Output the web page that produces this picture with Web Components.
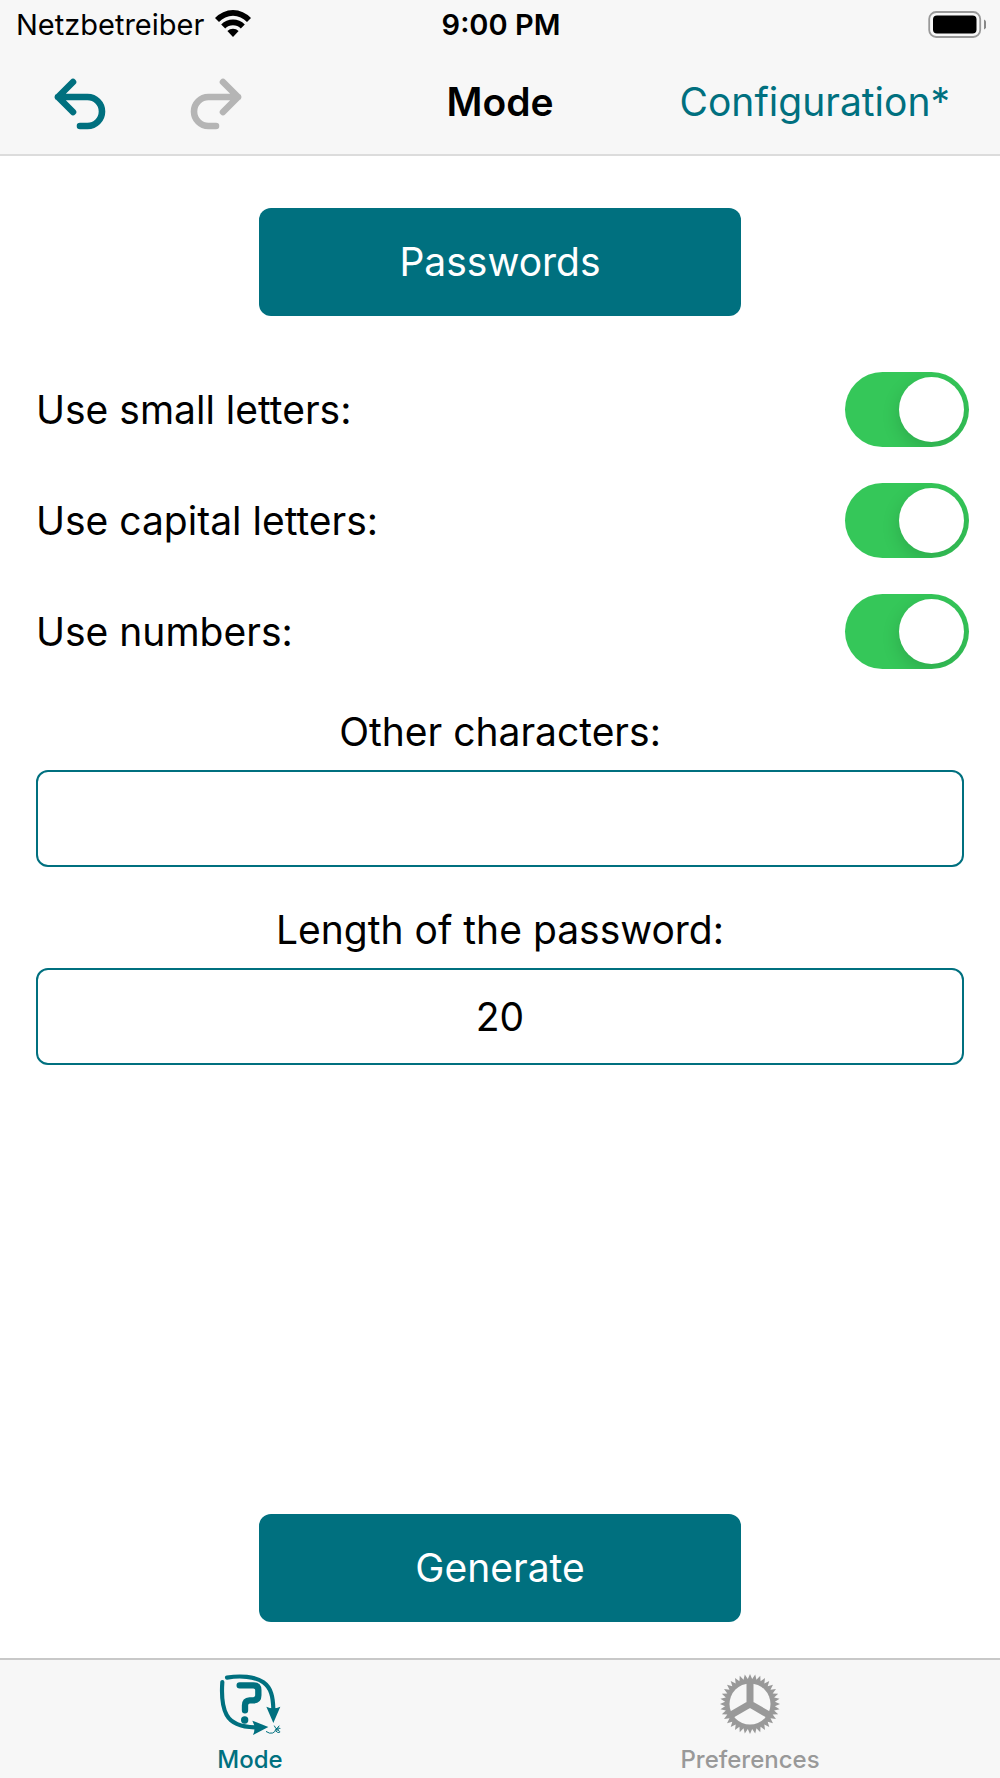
<!DOCTYPE html>
<html lang="en">
<head>
<meta charset="utf-8">
<meta name="viewport" content="width=device-width, initial-scale=1">
<title>Mode</title>
<style>
    html, body {
        margin: 0;
        height: 100%;
    }

    body {
        --accent: #00707f;
        --bar: #f7f7f7;
        --disabled: #b5b5b5;
        background: #fff;
        color: #000;
        font-family: Inter, "Liberation Sans", sans-serif;
        font-size: 39px;
        line-height: 48px;
    }
</style>
</head>
<body>
<password-app></password-app>

<script>
/* status bar: carrier, clock, battery */
class StatusBar extends HTMLElement {
    constructor() {
        super();
        this.attachShadow({mode: "open"});
        this.shadowRoot.innerHTML = `
            <style>
                :host {
                    display: grid;
                    grid-template-columns: 1fr auto 1fr;
                    align-items: center;
                    height: 50px;
                    padding: 0 14px 0 16px;
                    font-size: 29px;
                    line-height: 32px;
                }
                .carrier { display: flex; align-items: center; gap: 11px; }
                .time { font-weight: 600; }
                .battery { justify-self: end; }
                svg { display: block; }
            </style>
            <div class="carrier">
                <slot name="carrier"></slot>
                <svg width="36" height="30" viewBox="0 0 36 30">
                    <path d="M0 8A24.5 24.5 0 0 1 36 8L32 12A19 19 0 0 0 4 12Z"/>
                    <path d="M6.2 14.4A16.6 16.6 0 0 1 29.8 14.4L25.8 18.5A11.2 11.2 0 0 0 10.2 18.5Z"/>
                    <path d="M12.4 21A8 8 0 0 1 23.6 21L18 27Z"/>
                </svg>
            </div>
            <div class="time"><slot name="time"></slot></div>
            <svg class="battery" width="58" height="28" viewBox="0 0 58 28">
                <rect x="1.2" y="1" width="51" height="25" rx="7" fill="none" stroke="#999" stroke-width="1.8"/>
                <rect x="5" y="4.5" width="43.5" height="18" rx="4"/>
                <path d="M56 8.5C60 10.5 60 16.5 56 18.5Z" fill="#888"/>
            </svg>
        `;
    }
}

/* navigation bar with undo / redo, title and a link */
class NavBar extends HTMLElement {
    constructor() {
        super();
        this.attachShadow({mode: "open"});
        this.shadowRoot.innerHTML = `
            <style>
                :host {
                    display: grid;
                    grid-template-columns: 1fr auto 1fr;
                    align-items: center;
                    height: 104px;
                    padding: 0 50px;
                }
                .history { display: flex; gap: 76px; }
                button {
                    padding: 0;
                    border: 0;
                    background: none;
                    color: var(--accent);
                }
                button:disabled { color: var(--disabled); }
                svg {
                    display: block;
                    fill: none;
                    stroke: currentColor;
                    stroke-width: 6.6;
                    stroke-linecap: round;
                    stroke-linejoin: round;
                }
                h1 { margin: 0; font-size: inherit; font-weight: 600; }
                a {
                    justify-self: end;
                    color: var(--accent);
                    text-decoration: none;
                }
            </style>
            <div class="history">
                <button type="button" aria-label="Undo">
                    <svg width="60" height="56" viewBox="-4 -4 60 56">
                        <path d="M19 4L4 19L19 34M4 19H33.5A14.5 14.5 0 0 1 33.5 48H26"/>
                    </svg>
                </button>
                <button type="button" aria-label="Redo" disabled>
                    <svg width="60" height="56" viewBox="-4 -4 60 56">
                        <path d="M33 4L48 19L33 34M48 19H18.5A14.5 14.5 0 0 0 18.5 48H26"/>
                    </svg>
                </button>
            </div>
            <h1><slot name="title"></slot></h1>
            <a href="#configuration"><slot name="action"></slot></a>
        `;
    }
}

/* filled button */
class ActionButton extends HTMLElement {
    constructor() {
        super();
        this.attachShadow({mode: "open"});
        this.shadowRoot.innerHTML = `
            <style>
                :host {
                    display: block;
                    width: 100%;
                    max-width: 482px;
                    align-self: center;
                }
                button {
                    display: block;
                    width: 100%;
                    padding: 30px 16px;
                    border: 0;
                    border-radius: 12px;
                    background: var(--accent);
                    color: #fff;
                    font: inherit;
                }
            </style>
            <button type="button"><slot></slot></button>
        `;
    }
}

/* label on the left, switch on the right */
class SwitchRow extends HTMLElement {
    constructor() {
        super();
        this.attachShadow({mode: "open"});
        this.shadowRoot.innerHTML = `
            <style>
                :host {
                    display: flex;
                    align-items: center;
                    justify-content: space-between;
                }
                input {
                    appearance: none;
                    display: flex;
                    flex: none;
                    box-sizing: border-box;
                    width: 124px;
                    height: 75px;
                    margin: 0;
                    padding: 5px;
                    border-radius: 38px;
                    background: #e9e9eb;
                    overflow: hidden;
                }
                input::before {
                    content: "";
                    width: 65px;
                    height: 65px;
                    border-radius: 50%;
                    background: #fff;
                    box-shadow: 0 6px 18px rgba(0, 0, 0, 0.15);
                }
                input:checked {
                    justify-content: flex-end;
                    background: #35c759;
                }
            </style>
            <label for="switch"><slot></slot></label>
            <input id="switch" type="checkbox" role="switch">
        `;
    }

    connectedCallback() {
        this.shadowRoot.querySelector('input').checked = this.hasAttribute('checked');
    }
}

/* centred caption over a text box */
class TextField extends HTMLElement {
    constructor() {
        super();
        this.attachShadow({mode: "open"});
        this.shadowRoot.innerHTML = `
            <style>
                :host {
                    display: flex;
                    flex-direction: column;
                    gap: 14px;
                    text-align: center;
                }
                input {
                    box-sizing: border-box;
                    width: 100%;
                    height: 97px;
                    margin: 0;
                    padding: 0 16px;
                    border: 2px solid var(--accent);
                    border-radius: 12px;
                    background: #fff;
                    color: inherit;
                    font: inherit;
                    text-align: center;
                }
            </style>
            <label for="field"><slot></slot></label>
            <input id="field" type="text">
        `;
    }

    connectedCallback() {
        const input = this.shadowRoot.querySelector('input');
        input.value = this.getAttribute('value') || '';
        input.inputMode = this.getAttribute('inputmode') || 'text';
    }
}

/* one entry of the tab bar: icon slot over its label */
class TabItem extends HTMLElement {
    constructor() {
        super();
        this.attachShadow({mode: "open"});
        this.shadowRoot.innerHTML = `
            <style>
                :host { display: block; flex: 1; color: #999; }
                :host([active]) { color: var(--accent); }
                a {
                    display: flex;
                    flex-direction: column;
                    align-items: center;
                    gap: 10px;
                    padding: 12px 0 4px;
                    color: inherit;
                    text-decoration: none;
                    font-size: 24px;
                    font-weight: 500;
                    line-height: 28px;
                }
            </style>
            <a><slot name="icon"></slot><span><slot></slot></span></a>
        `;
    }

    connectedCallback() {
        this.shadowRoot.querySelector('a').href = this.getAttribute('href');
    }
}

class ModeIcon extends HTMLElement {
    constructor() {
        super();
        this.attachShadow({mode: "open"});
        this.shadowRoot.innerHTML = `
            <style>
                :host { display: block; }
                svg { display: block; }
            </style>
            <svg width="64" height="64" viewBox="54 37 192 192" fill="none" stroke="currentColor" stroke-linecap="round">
                <path d="M81 54C120 47 164 50 190 68C214 85 219 112 220 148" stroke-width="12.5"/>
                <path d="M67 67C64 108 66 140 80 166C94 191 122 202 164 203" stroke-width="12.5"/>
                <path d="M199 141Q220 151 241 141L220 190Z" fill="currentColor" stroke="none"/>
                <path d="M157 183L205 202L159 226Q169 204 157 183Z" fill="currentColor" stroke="none"/>
                <path d="M119 77H160Q175 77 175 91V107Q175 122 160 122H149Q135 123 135 137V152" stroke-width="19"/>
                <circle cx="134" cy="181" r="11" fill="currentColor" stroke="none"/>
                <path d="M199 216Q209 223 218 220Q226 217 227 209Q229 202 240 206M223 199Q226 209 235 210M237 199L228 211Q240 211 239 218Q234 221 227 214" stroke-width="3"/>
            </svg>
        `;
    }
}

class GearIcon extends HTMLElement {
    constructor() {
        super();
        this.attachShadow({mode: "open"});
        this.shadowRoot.innerHTML = `
            <style>
                :host { display: block; }
                svg { display: block; }
            </style>
            <svg width="64" height="64" viewBox="-32 -32 64 64">
                <path d="${this._outline(36, 30, 25)}" fill="currentColor"/>
                <circle r="20.5" fill="var(--bar)"/>
                <path d="M0 0V-22M0 0L-19 11M0 0L19 11" stroke="currentColor" stroke-width="7"/>
            </svg>
        `;
    }

    /**
     * saw tooth ring: tip and notch take turns around the circle
     */
    _outline(teeth, tip, notch) {
        const points = [];
        for (let i = 0; i < teeth * 2; i++) {
            const angle = Math.PI * i / teeth;
            const radius = i % 2 ? notch : tip;
            points.push((radius * Math.sin(angle)).toFixed(2) + ' ' + (-radius * Math.cos(angle)).toFixed(2));
        }
        return 'M' + points.join('L') + 'Z';
    }
}

class PasswordApp extends HTMLElement {
    constructor() {
        super();
        this.attachShadow({mode: "open"});
        this.shadowRoot.innerHTML = `
            <style>
                :host {
                    display: flex;
                    flex-direction: column;
                    min-height: 100%;
                }
                header {
                    background: var(--bar);
                    border-bottom: 2px solid #dcdcdc;
                }
                main {
                    display: flex;
                    flex: 1;
                    flex-direction: column;
                    padding: 52px 36px 36px;
                }
                .switches {
                    display: flex;
                    flex-direction: column;
                    gap: 36px;
                    margin: 56px -5px 39px 0;
                }
                .fields {
                    display: flex;
                    flex-direction: column;
                    gap: 39px;
                    margin-bottom: auto;
                }
                nav {
                    display: flex;
                    background: var(--bar);
                    border-top: 2px solid #c8c8c8;
                }
            </style>
            <header>
                <status-bar>
                    <span slot="carrier">Netzbetreiber</span>
                    <span slot="time">9:00 PM</span>
                </status-bar>
                <nav-bar>
                    <span slot="title">Mode</span>
                    <span slot="action">Configuration*</span>
                </nav-bar>
            </header>
            <main>
                <action-button>Passwords</action-button>
                <div class="switches">
                    <switch-row checked>Use small letters:</switch-row>
                    <switch-row checked>Use capital letters:</switch-row>
                    <switch-row checked>Use numbers:</switch-row>
                </div>
                <div class="fields">
                    <text-field>Other characters:</text-field>
                    <text-field value="20" inputmode="numeric">Length of the password:</text-field>
                </div>
                <action-button>Generate</action-button>
            </main>
            <nav>
                <tab-item href="#mode" active><mode-icon slot="icon"></mode-icon>Mode</tab-item>
                <tab-item href="#preferences"><gear-icon slot="icon"></gear-icon>Preferences</tab-item>
            </nav>
        `;
    }
}

customElements.define('status-bar', StatusBar);
customElements.define('nav-bar', NavBar);
customElements.define('action-button', ActionButton);
customElements.define('switch-row', SwitchRow);
customElements.define('text-field', TextField);
customElements.define('tab-item', TabItem);
customElements.define('mode-icon', ModeIcon);
customElements.define('gear-icon', GearIcon);
customElements.define('password-app', PasswordApp);
</script>
</body>
</html>
